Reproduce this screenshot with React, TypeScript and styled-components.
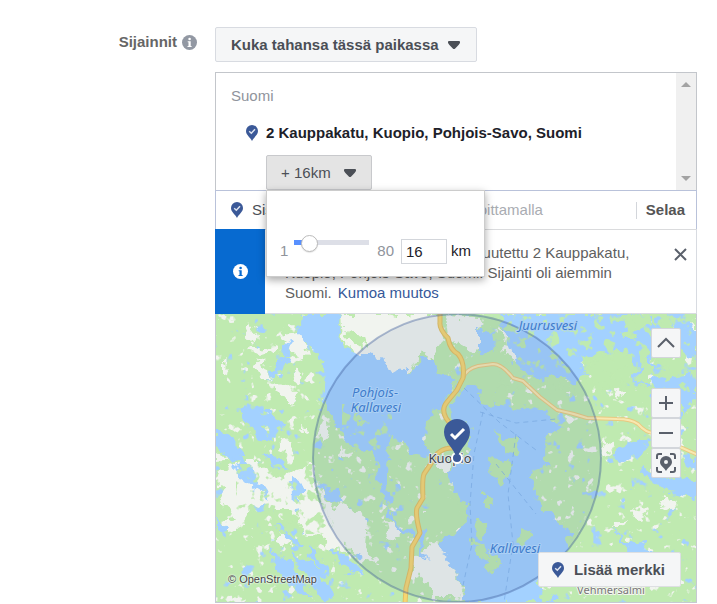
import React, { useState } from "react";
import styled, { createGlobalStyle } from "styled-components";

const GlobalStyle = createGlobalStyle`
  * { box-sizing: border-box; }
  body { margin: 0; background: #fff; color: #4b4f56; font: 15px/20px "Liberation Sans", Arial, sans-serif; }
  button, input { font: inherit; color: inherit; }
  button { cursor: pointer; }
`;

const Page = styled.main`
  display: grid;
  grid-template-columns: 197px minmax(0, 1fr);
  column-gap: 18px;
  padding: 27px 20px 0 0;
`;
const FieldLabel = styled.div`
  display: flex;
  justify-content: flex-end;
  align-items: center;
  align-self: start;
  gap: 5px;
  height: 30px;
  font-weight: bold;
  color: #666;
`;
const Field = styled.section`
  display: flex;
  flex-direction: column;
  align-items: stretch;
`;
const DropButton = styled.button<{ $pressed?: boolean }>`
  display: inline-flex;
  align-items: center;
  align-self: flex-start;
  gap: ${(p) => (p.$pressed ? 12 : 8)}px;
  height: 35px;
  padding: 0 ${(p) => (p.$pressed ? 14 : 15)}px;
  border: 1px solid ${(p) => (p.$pressed ? "#c8c9cc" : "#d8dbe1")};
  border-radius: 2px;
  background: ${(p) => (p.$pressed ? "#e4e4e4" : "#f5f6f7")};
  font-weight: ${(p) => (p.$pressed ? "normal" : "bold")};
  white-space: nowrap;
`;
const ListBox = styled.div`
  display: flex;
  margin-top: 10px;
  height: 118px;
  border: 1px solid #c3c6cb;
  border-bottom: 0;
`;
const ListContent = styled.div`
  flex: 1;
  padding: 13px 0 0 15px;
`;
const Country = styled.div`
  color: #90949c;
`;
const Place = styled.div`
  display: flex;
  align-items: center;
  gap: 8px;
  margin: 17px 0 12px 15px;
  font-weight: bold;
  color: #1d2129;
`;
const Radius = styled.div`
  position: relative;
  width: max-content;
  margin-left: 35px;
`;
const ScrollTrack = styled.div`
  display: flex;
  flex-direction: column;
  justify-content: space-between;
  align-items: center;
  width: 20px;
  padding: 9px 0;
  background: #f0f0f0;
`;
const Popover = styled.div`
  position: absolute;
  z-index: 2;
  top: 100%;
  left: 0;
  display: flex;
  align-items: flex-end;
  width: 219px;
  height: 87px;
  padding: 0 13px 12px;
  border: 1px solid #ccc;
  background: #fff;
  box-shadow: 0 3px 8px rgba(0, 0, 0, 0.35);
`;
const Bound = styled.span`
  line-height: 26px;
  color: #90949c;
`;
const SliderTrack = styled.div`
  width: 75px;
  height: 5px;
  margin: 0 8px 19px 6px;
  background: linear-gradient(to right, #5890ff 15px, #dddfe7 15px);
`;
const Slider = styled.input`
  appearance: none;
  display: block;
  width: 91px;
  height: 17px;
  margin: -5px -7px;
  background: transparent;
  &::-webkit-slider-thumb {
    appearance: none;
    width: 17px;
    height: 17px;
    border: 1px solid #bbb;
    border-radius: 50%;
    background: #fff;
    box-shadow: 0 1px 1px rgba(0, 0, 0, 0.1);
  }
`;
const RadiusInput = styled.input`
  width: 46px;
  height: 25px;
  margin: 0 4px 0 7px;
  padding: 0 4px;
  border: 1px solid #d3d6db;
  color: #1d2129;
`;
const Unit = styled.label`
  line-height: 26px;
  color: #1d2129;
`;
const SearchRow = styled.div`
  display: flex;
  align-items: center;
  height: 40px;
  padding: 0 11px 0 15px;
  border: 1px solid #b9c2da;
  border-bottom-color: #dadbdd;
`;
const Include = styled.button`
  display: flex;
  align-items: center;
  justify-content: space-between;
  width: 84px;
  margin: 0 21px 0 9px;
  padding: 0;
  border: 0;
  background: none;
`;
const SearchInput = styled.input`
  flex: 1;
  min-width: 0;
  padding: 0;
  border: 0;
  outline: 0;
  background: none;
  &::placeholder { color: #a9acb2; opacity: 1; }
`;
const Browse = styled.button`
  height: 17px;
  padding: 0 0 0 9px;
  border: 0;
  border-left: 1px solid #d3d6db;
  background: none;
  font-weight: bold;
  line-height: 16px;
  color: #555;
`;
const Notice = styled.div`
  display: flex;
  margin-top: -1px;
  min-height: 85px;
  border-right: 1px solid #d8dbe1;
  border-bottom: 1px solid #d8dbe1;
`;
const NoticeMark = styled.div`
  display: flex;
  align-items: center;
  justify-content: center;
  width: 50px;
  margin-bottom: -1px;
  background: #076ad0;
`;
const Message = styled.p`
  flex: 1;
  margin: 0;
  padding: 14px 32px 10px 20px;
  color: #606060;
`;
const Undo = styled.a`
  margin-left: 2px;
  color: #365899;
  text-decoration: none;
`;
const Close = styled.button`
  align-self: flex-start;
  display: flex;
  margin: 19px 8px 0 0;
  padding: 0;
  border: 0;
  background: none;
`;
const MapFrame = styled.div`
  position: relative;
  height: 289px;
  border: 1px solid #c6c9d2;
  border-top: 0;
  overflow: hidden;
  background: #bfeab0;
`;
const MapDrawing = styled.svg`
  display: block;
  width: 100%;
  height: 100%;
`;
const MapControls = styled.div`
  position: absolute;
  top: 14px;
  right: 15px;
  display: flex;
  flex-direction: column;
`;
const MapButton = styled.button<{ $apart?: boolean }>`
  display: flex;
  align-items: center;
  justify-content: center;
  width: 30px;
  height: 30px;
  margin-bottom: ${(p) => (p.$apart ? 30 : 0)}px;
  padding: 0;
  border: 1px solid #d3d6db;
  border-radius: 2px;
  background: #f5f6f7;
`;
const DropPin = styled.button`
  position: absolute;
  right: 15px;
  bottom: 15px;
  display: flex;
  align-items: center;
  gap: 10px;
  height: 35px;
  padding: 0 15px 0 13px;
  border: 1px solid #dddfe2;
  border-radius: 2px;
  background: #f5f6f7;
  font-weight: bold;
`;
const Credit = styled.a`
  position: absolute;
  left: 12px;
  bottom: 15px;
  font-size: 11px;
  line-height: 16px;
  color: #444;
  text-decoration: none;
  text-shadow: 0 0 2px #fff, 0 0 2px #fff;
`;

const Caret = () => (
  <svg width="14" height="10" viewBox="0 0 14 10" aria-hidden="true">
    <path d="M2 1h10q1.500.3 1 1.800Q12.500 4.500 8.200 8.400 7 9.500 5.800 8.400 1.500 4.500 1 2.800.5 1.300 2 1z" fill="#4b4f56" />
  </svg>
);
const Pin = () => (
  <svg width="12" height="16" viewBox="0 0 12 16" aria-hidden="true">
    <path d="M6 0a6 6 0 0 1 6 6c0 4-4 6-6 10C4 12 0 10 0 6a6 6 0 0 1 6-6z" fill="#3b5998" />
    <path d="M3.200 6.300 5.300 8.200 9 4.300" fill="none" stroke="#dfe5f1" strokeWidth="1.500" />
  </svg>
);
const Info = ({ disc, mark }: { disc: string; mark: string }) => (
  <svg width="15" height="15" viewBox="0 0 15 15" aria-hidden="true">
    <circle cx="7.500" cy="7.500" r="7.500" fill={disc} />
    <circle cx="7.600" cy="4" r="1.300" fill={mark} />
    <path d="M5.700 6.200h3v4.700h.9V12H5.500v-1.100h1V7.300h-.8z" fill={mark} />
  </svg>
);

const poly = (list: string[], fill: string) => list.map((p) => <polygon key={p} points={p} fill={fill} />);

const water = [
  "84,0 124,0 122,18 128,36 142,40 154,40 164,46 176,54 196,58 208,44 216,44 222,60 238,64 236,78 226,92 222,104 210,108 208,130 214,142 196,140 188,126 176,122 172,146 160,148 152,138 136,136 124,118 116,104 108,82 110,60 104,44 94,30 82,20",
  "248,74 262,64 278,90 300,94 330,98 344,112 328,124 330,150 314,160 322,186 340,206 356,220 348,236 330,250 320,270 330,288 250,288 244,266 232,246 222,226 238,222 252,206 250,190 238,176 232,156 246,150 256,132 238,110 234,90",
  "158,140 170,142 174,160 176,188 170,190 164,176",
  "170,188 178,204 188,214 200,220 198,224 184,216 172,202",
  "262,10 276,20 278,32 272,46 262,36",
  "280,0 434,0 440,20 436,56 430,70 420,74 418,42 404,36 380,40 364,48 370,60 358,72 346,62 330,72 314,60 300,46 290,20",
  "0,116 12,122 24,134 28,144 16,146 0,132",
  "18,140 30,148 44,166 56,184 42,178 24,164",
  "44,138 60,144 74,156 60,154",
  "75,163 86,172 86,190 76,182",
  "28,92 50,100 70,112 56,116 46,110 58,130 42,122 26,104",
  "62,48 72,42 64,62 54,58",
  "70,26 76,28 74,42 68,42",
  "58,210 76,218 88,232 72,228",
  "52,236 68,242 80,256 94,286 80,276 64,258",
  "74,240 92,246 104,256 116,278 110,288 98,272 86,254",
  "90,236 100,238 114,262 104,258",
  "116,236 132,242 148,260 132,258",
  "100,168 122,178 124,190 114,186",
  "0,204 12,214 8,222 0,218",
  "394,140 420,126 432,126 424,140 402,146",
  "424,154 450,160 481,166 481,184 454,180 430,164",
  "434,64 446,60 462,62 481,58 481,82 468,100 452,80 438,92",
  "444,96 464,98 462,122 448,126",
  "452,0 470,0 481,20 481,46 468,40",
  "206,210 214,206 208,224 206,238 214,246 204,240 202,224",
  "396,214 412,230 428,228 442,244 450,268 438,256 416,244",
  "336,278 342,288 330,288",
  "466,140 481,144 481,156 470,154",
];
const pale = [
  "124,0 222,0 228,26 216,44 206,38 196,56 176,62 166,48 142,44 126,26",
  "230,2 262,4 268,24 258,38 244,34 232,20",
  "284,14 304,26 300,46 290,40",
  "62,22 88,18 92,42 80,40 70,32",
  "34,6 40,18 36,30 30,22",
  "32,30 52,34 60,30 58,38 44,40 30,36",
  "38,44 46,48 56,66 48,66",
  "6,46 14,54 12,64 6,60",
  "80,56 88,60 84,70 76,66",
  "54,70 72,72 84,78 76,88 66,84",
  "108,104 114,118 106,130 102,116",
  "86,112 96,114 94,118 86,116",
  "66,122 76,128 74,140 64,136",
  "126,134 136,138 132,146 124,144",
  "2,158 20,148 42,148 60,164 74,158 98,150 100,180 116,210 128,224 130,238 116,234 102,222 88,220 82,202 74,196 60,196 54,188 38,194 26,212 14,218 6,208 20,204 8,190",
  "104,172 116,194 130,190 152,208 150,232 162,250 138,240 122,220 108,196",
  "196,246 220,228 228,232 234,248 244,268 242,284 216,284 212,270 196,260",
  "222,144 236,146 234,158 222,156",
  "170,208 190,212 182,224 172,222",
  "206,196 240,190 238,208 224,204 208,206",
  "62,220 80,224 76,232 62,228",
  "0,0 4,4 0,8",
  "0,138 14,146 0,148",
  "354,48 362,46 364,54 360,62 354,56",
  "390,126 398,128 390,142 386,138",
  "404,68 410,74 406,84 396,78",
  "464,6 481,8 481,18 470,16",
  "398,208 412,206 406,214 396,214",
  "416,194 430,198 424,206 414,202",
  "446,182 462,188 458,194 444,190",
];
const islands = [
  "218,40 226,34 240,46 238,60 226,58 218,52",
  "258,44 286,32 296,52 292,74 280,74 276,92 266,90 260,76 250,68",
  "214,100 224,96 226,108 238,112 252,110 256,130 246,138 230,132 222,144 212,142",
  "216,144 224,160 224,172 238,178 242,188 230,184 246,192 248,206 234,222 222,218 212,222 204,210 212,186",
  "278,114 288,124 302,126 304,144 290,140 284,130",
  "274,144 292,146 294,158 286,172 276,160",
  "267,178 276,184 272,194 267,190",
  "256,224 268,230 272,248 262,246",
  "262,204 274,210 266,224 256,216",
  "274,236 283,248 276,258 270,248",
  "306,214 318,216 312,228 300,230",
  "172,158 178,162 176,178 172,174",
  "374,42 400,38 418,46 416,64 408,76 390,78 380,64 368,58",
  "424,42 434,40 434,68 422,70",
  "330,62 350,68 358,78 338,78 326,72",
  "404,18 416,14 420,26 408,26",
  "134,90 142,96 140,106",
  "142,104 150,106 146,114",
  "128,14 148,22 152,28 142,32 132,26",
  "400,4 430,0 436,10 420,16",
];

const noise = [
  { id: "groves", seed: 12, cut: -6.9, freq: 0.09 },
  { id: "ponds", seed: 31, cut: -8, freq: 0.08 },
  { id: "clearings", seed: 8, cut: -7.8, freq: 0.1 },
];

const eastRoad =
  "M247 64Q250 55 262 52L277 50Q286 50 297 64L307 67 324 83 341 96Q356 99 371 104L401 105Q415 105 422 110 430 119 438 119L464 133 480 140";
const mainRoad =
  "M224-2V8Q223 15 232 24 234 36 242 40 249 48 247 64L241 76 231 88Q225 95 230 104L240 118Q246 132 236 134 222 134 216 148L208 160Q206 165 207 184L201 194Q199 200 204 219L196 233 195 254 190 274 189 290";

const MapArt = () => (
  <MapDrawing viewBox="0 0 480 288" preserveAspectRatio="xMidYMid slice" role="img" aria-label="Kuopio">
    <defs>
      <filter id="coast" x="-5%" y="-5%" width="110%" height="110%">
        <feTurbulence type="fractalNoise" baseFrequency="0.1" numOctaves="3" seed="4" />
        <feDisplacementMap in="SourceGraphic" scale="15" xChannelSelector="R" yChannelSelector="G" />
      </filter>
      {noise.map(({ id, seed, cut, freq }) => (
        <filter key={id} id={id} x="0" y="0" width="100%" height="100%" colorInterpolationFilters="sRGB">
          <feTurbulence type="fractalNoise" baseFrequency={freq} numOctaves="3" seed={seed} />
          <feColorMatrix values={`0 0 0 0 0  0 0 0 0 0  0 0 0 0 0  12 0 0 0 ${cut}`} result="n" />
          <feComposite in="SourceGraphic" in2="n" operator="in" />
        </filter>
      ))}
    </defs>
    <rect width="480" height="288" fill="#bfeab0" />
    <rect width="480" height="288" fill="#f1f4ef" filter="url(#clearings)" />
    <rect width="480" height="288" fill="#a3d1ff" filter="url(#ponds)" />
    <g filter="url(#coast)">
      {poly(pale, "#f1f4ef")}
      {poly(water, "#a3d1ff")}
      {poly(islands, "#bfeab0")}
    </g>
    <g filter="url(#groves)" fill="#bfeab0">
      <rect x="280" y="0" width="200" height="80" />
      <rect x="126" y="90" width="50" height="50" />
      <rect x="20" y="150" width="90" height="70" />
    </g>
    <path
      d="M267 98 258 140 254 190 256 230 246 276M264 98 300 109 340 105M300 120 292 180 297 230 288 288M248 74 283 108 320 136M280 150 320 200"
      fill="none"
      stroke="#7fafe8"
      strokeOpacity=".7"
      strokeDasharray="5 4"
    />
    <g fill="none" strokeLinecap="round" strokeLinejoin="round">
      <path d={eastRoad} stroke="#e8c980" strokeWidth="4" />
      <path d={eastRoad} stroke="#f8e8b0" strokeWidth="2" />
      <path d={mainRoad} stroke="#e4c062" strokeWidth="5" />
      <path d={mainRoad} stroke="#f6d672" strokeWidth="3" />
    </g>
    <circle cx="241" cy="144" r="144" fill="#3b5998" fillOpacity=".1" stroke="#3b5998" strokeOpacity=".4" strokeWidth="2" />
    <g fontFamily="Noto Sans, sans-serif" fontSize="13" textAnchor="middle" paintOrder="stroke" strokeWidth="2" strokeLinejoin="round">
      <g fill="#3e7ccc" stroke="#acd0f5" fontStyle="italic">
        <text x="159" y="83">Pohjois-</text>
        <text x="160" y="98">Kallavesi</text>
        <text x="332" y="16">Juurusvesi</text>
        <text x="299" y="239">Kallavesi</text>
      </g>
      <text x="234" y="149" fill="#42464e" stroke="#dde3e8">Kuopio</text>
      <text x="395" y="280" fill="#777" stroke="#f3f5ef" fontSize="11">Vehmersalmi</text>
    </g>
    <circle cx="241" cy="144" r="5" fill="#3b5998" stroke="#fff" strokeWidth="2" />
    <path d="M241 105a13 13 0 0 1 13 13c0 10-9 15-13 26-4-11-13-16-13-26a13 13 0 0 1 13-13z" fill="#3b5998" />
    <path d="m235 120 4 4 9-9" fill="none" stroke="#fff" strokeWidth="3" />
  </MapDrawing>
);

const Glyph = ({ d, size = 20 }: { d: string; size?: number }) => (
  <svg width={size} height={size} viewBox={`0 0 ${size} ${size}`} fill="none" stroke="#5a606b" strokeWidth="2" aria-hidden="true">
    <path d={d} />
  </svg>
);

export default function App() {
  const [radius, setRadius] = useState("16");
  const onRadius = (e: React.ChangeEvent<HTMLInputElement>) => setRadius(e.target.value);
  return (
    <>
      <GlobalStyle />
      <Page>
        <FieldLabel>
          Sijainnit
          <Info disc="#9298a3" mark="#fff" />
        </FieldLabel>
        <Field aria-label="Sijainnit">
          <DropButton>
            Kuka tahansa tässä paikassa
            <Caret />
          </DropButton>
          <ListBox>
            <ListContent>
              <Country>Suomi</Country>
              <Place>
                <Pin />
                2 Kauppakatu, Kuopio, Pohjois-Savo, Suomi
              </Place>
              <Radius>
                <DropButton $pressed aria-expanded="true">
                  + {radius}km
                  <Caret />
                </DropButton>
                <Popover>
                  <Bound>1</Bound>
                  <SliderTrack>
                    <Slider type="range" min="1" max="80" value={radius} onChange={onRadius} aria-label="km" />
                  </SliderTrack>
                  <Bound>80</Bound>
                  <RadiusInput id="radius" value={radius} onChange={onRadius} />
                  <Unit htmlFor="radius">km</Unit>
                </Popover>
              </Radius>
            </ListContent>
            <ScrollTrack>
              <svg width="10" height="5" aria-hidden="true"><path d="M0 5 5 0l5 5z" fill="#a3a3a3" /></svg>
              <svg width="10" height="5" aria-hidden="true"><path d="M0 0h10L5 5z" fill="#a3a3a3" /></svg>
            </ScrollTrack>
          </ListBox>
          <SearchRow>
            <Pin />
            <Include>
              Sisällytä
              <Caret />
            </Include>
            <SearchInput placeholder="Lisää sijainteja kirjoittamalla" aria-label="Lisää sijainteja" />
            <Browse>Selaa</Browse>
          </SearchRow>
          <Notice>
            <NoticeMark><Info disc="#fff" mark="#076ad0" /></NoticeMark>
            <Message>
              Kohteiden sijainniksi on nyt muutettu 2 Kauppakatu, Kuopio, Pohjois-Savo, Suomi. Sijainti oli aiemmin Suomi.{" "}
              <Undo href="#">Kumoa muutos</Undo>
            </Message>
            <Close aria-label="Sulje"><Glyph d="m2 1 11 11M13 1 2 12" size={15} /></Close>
          </Notice>
          <MapFrame>
            <MapArt />
            <MapControls>
              <MapButton $apart aria-label="Piilota"><Glyph d="m2 14 8-8 8 8" /></MapButton>
              <MapButton aria-label="Lähennä"><Glyph d="M3 10h14M10 3v14" /></MapButton>
              <MapButton aria-label="Loitonna"><Glyph d="M3 10h14" /></MapButton>
              <MapButton aria-label="Keskitä">
                <svg width="22" height="22" viewBox="0 0 22 22" aria-hidden="true">
                  <path d="M2 7V4q0-2 2-2h3M15 2h3q2 0 2 2v3M20 15v3q0 2-2 2h-3M7 20H4q-2 0-2-2v-3" fill="none" stroke="#5a606b" strokeWidth="2" />
                  <path fillRule="evenodd" d="M11 4a6 6 0 0 1 6 6c0 4-4 5-6 9-2-4-6-5-6-9a6 6 0 0 1 6-6zm0 4a2 2 0 1 0 0 4 2 2 0 0 0 0-4z" fill="#5a606b" />
                </svg>
              </MapButton>
            </MapControls>
            <DropPin><Pin />Lisää merkki</DropPin>
            <Credit href="#">© OpenStreetMap</Credit>
          </MapFrame>
        </Field>
      </Page>
    </>
  );
}
